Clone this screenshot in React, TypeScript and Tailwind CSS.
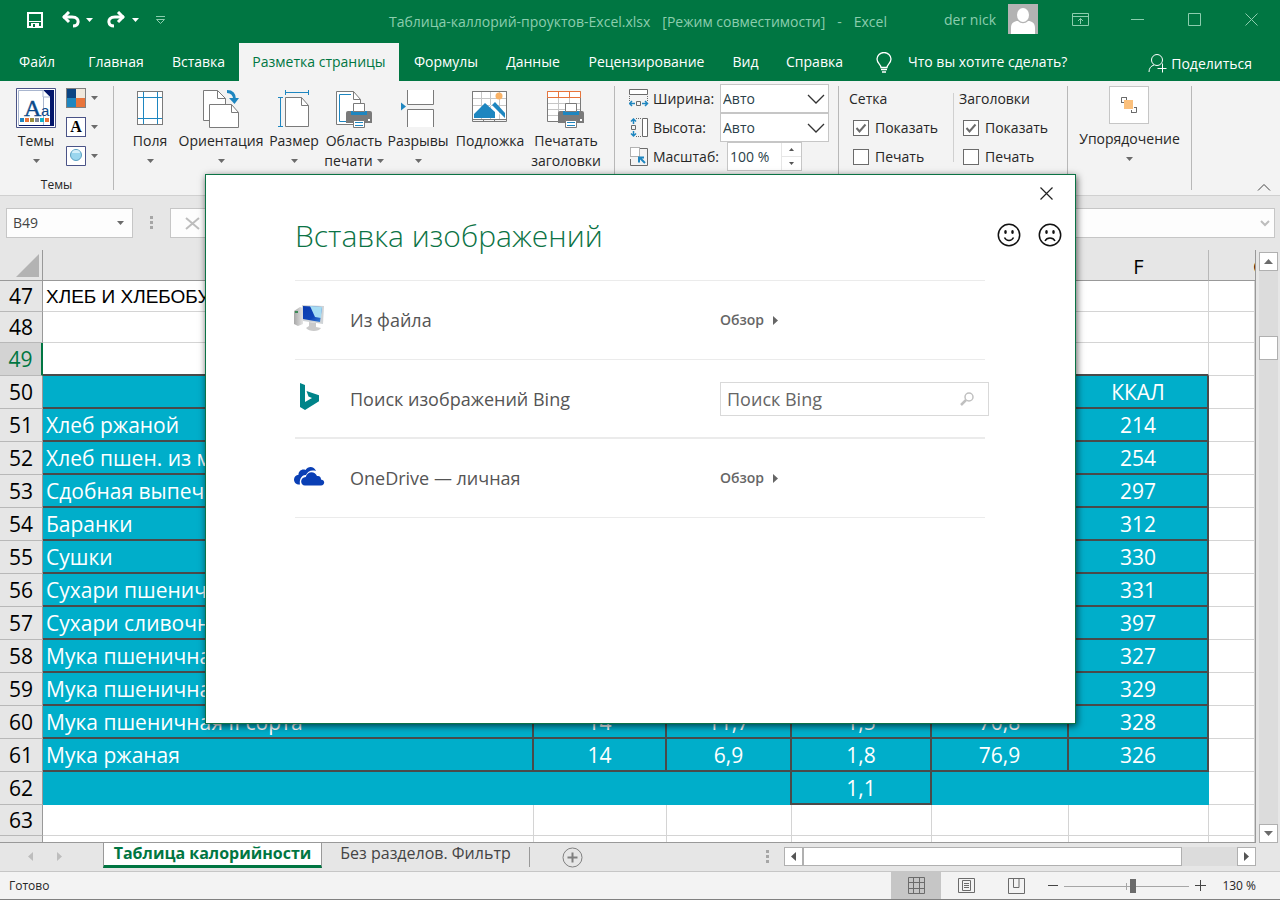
import { useState, type ReactNode } from 'react';

const tabsBefore = [
  { name: 'Файл', width: 'w-[74px]' },
  { name: 'Главная', width: 'w-[84px]' },
  { name: 'Вставка', width: 'w-[81px]' },
];

const tabsAfter = [
  { name: 'Формулы', width: 'w-[94px]' },
  { name: 'Данные', width: 'w-[80px]' },
  { name: 'Рецензирование', width: 'w-[147px]' },
  { name: 'Вид', width: 'w-[51px]' },
  { name: 'Справка', width: 'w-[87px]' },
];

const products = [
  { row: 51, name: 'Хлеб ржаной', cells: ['42,4', '4,7', '0,7', '49,8', '214'] },
  { row: 52, name: 'Хлеб пшен. из муки I сорта', cells: ['34,3', '7,7', '2,4', '53,4', '254'] },
  { row: 53, name: 'Сдобная выпечка', cells: ['26,1', '7,6', '4,5', '60', '297'] },
  { row: 54, name: 'Баранки', cells: ['17', '10,4', '1,3', '68,7', '312'] },
  { row: 55, name: 'Сушки', cells: ['12', '11', '1,3', '73', '330'] },
  { row: 56, name: 'Сухари пшеничные', cells: ['12', '11,2', '1,4', '72,4', '331'] },
  { row: 57, name: 'Сухари сливочные', cells: ['8', '8,5', '10,6', '71,3', '397'] },
  { row: 58, name: 'Мука пшеничная в/сорта', cells: ['14', '10,3', '0,9', '74,2', '327'] },
  { row: 59, name: 'Мука пшеничная I сорта', cells: ['14', '10,6', '1,3', '73,2', '329'] },
  { row: 60, name: 'Мука пшеничная II сорта', cells: ['14', '11,7', '1,5', '70,8', '328'] },
  { row: 61, name: 'Мука ржаная', cells: ['14', '6,9', '1,8', '76,9', '326'] },
];

function Caret({ className = 'fill-[#6b6b6b]' }: { className?: string }) {
  return (
    <svg width="7" height="4" viewBox="0 0 7 4" className={`shrink-0 ${className}`}>
      <path d="M0 0h7L3.500 4z" />
    </svg>
  );
}

function Divider() {
  return <div className="my-[5px] w-px shrink-0 bg-[#b8b8b8]" />;
}

function Printer({ x, y }: { x: number; y: number }) {
  return (
    <g transform={`translate(${x} ${y})`}>
      <path d="M2 8h22a2 2 0 0 1 2 2v10H0V10a2 2 0 0 1 2-2z" fill="#7a7a7a" />
      <path d="M5 8h16v4H5z" fill="#1e86c0" />
      <path d="M7.500 8.500V.5h11v8z" fill="#fff" stroke="#7a7a7a" />
      <path d="M22 16h2v2h-2z" fill="#fff" />
      <path d="M7.500 17.500h11v7h-11z" fill="#fff" stroke="#7a7a7a" />
      <path d="M9 19.500h8M9 22.500h8" stroke="#1e86c0" />
    </g>
  );
}

const pageFill = { fill: '#fff', stroke: '#7a7a7a' };

const MarginsIcon = (
  <svg width="26" height="36" fill="none">
    <rect x=".5" y="1.500" width="25" height="33" {...pageFill} />
    <path d="M6.500 2v32M20.500 2v32M1 7.500h24M1 28.500h24" stroke="#1e86c0" />
  </svg>
);

const OrientationIcon = (
  <svg width="36" height="38" fill="none">
    <path d="M.5 30.500V.5h14l8 8v22z" {...pageFill} />
    <path d="M14.500.5v8h8" stroke="#7a7a7a" />
    <path d="M6.500 37.500v-23h22l7 8v15z" stroke="#7a7a7a" fill="#fff" />
    <path d="M28.500 14.500v8h7" stroke="#7a7a7a" />
    <path d="M24 1.500c5 0 7.500 2.500 7.500 8" stroke="#1e86c0" strokeWidth="3" />
    <path d="M26 8l5.500 6L36 8z" fill="#1e86c0" />
  </svg>
);

const SizeIcon = (
  <svg width="32" height="37" fill="none">
    <path d="M7.500 36.500v-29h16l7 8v21z" {...pageFill} />
    <path d="M23.500 7.500v8h7" stroke="#7a7a7a" />
    <path d="M7.500 0v5M30.500 0v5M8 2.500h22M0 7.500h5M0 36.500h5M2.500 8v28" stroke="#1e86c0" />
  </svg>
);

const PrintAreaIcon = (
  <svg width="36" height="38" fill="none">
    <path d="M.5 34.500V1.500h17l7 8v25z" {...pageFill} />
    <path d="M17.500 1.500v8h7" stroke="#7a7a7a" />
    <path d="M15 4.500H3.500v27H11" stroke="#1e86c0" />
    <Printer x={10} y={13} />
  </svg>
);

const BreaksIcon = (
  <svg width="34" height="37" fill="none">
    <path d="M6.500 0v14.500h26V0M6.500 37V19.500h26V37" {...pageFill} />
    <path d="M0 12.500v8l5-4z" fill="#1e86c0" />
  </svg>
);

const BackgroundIcon = (
  <svg width="36" height="34" fill="none">
    <path d="M.5 1.500h34v28H.5z" {...pageFill} />
    <path d="M1 8.500h33M1 15.500h33M9.500 2v27M18.500 2v27M27.500 2v27" stroke="#c6c6c6" />
    <path d="M.5 1.500h34v30H.5zM11.500 29v3M22.500 29v3" stroke="#7a7a7a" />
    <circle cx="27" cy="6" r="3.500" fill="#f9b266" />
    <path d="M2 28v-4l11-11 10 9 0 6zM20 15l3-3 10 11v5z" fill="#1e86c0" />
    <path d="M18 15l14 13" stroke="#fff" />
  </svg>
);

const PrintTitlesIcon = (
  <svg width="38" height="38" fill="none">
    <path d="M.5 1.500h33v30H.5z" {...pageFill} />
    <path d="M1 13.500h32M1 19.500h32M1 25.500h32M11.500 8v23M22.500 8v23" stroke="#c6c6c6" />
    <path d="M.5 1.500h33v6H.5zM11.500 2v5M22.500 2v5" stroke="#e8743b" fill="#fff" />
    <Printer x={11} y={13} />
  </svg>
);

const pageSetup = [
  { lines: ['Поля'], icon: MarginsIcon, width: 'w-14', caret: true },
  { lines: ['Ориентация'], icon: OrientationIcon, width: 'w-[86px]', caret: true },
  { lines: ['Размер'], icon: SizeIcon, width: 'w-[60px]', caret: true },
  { lines: ['Область', 'печати'], icon: PrintAreaIcon, width: 'w-[60px]', caret: true },
  { lines: ['Разрывы'], icon: BreaksIcon, width: 'w-[68px]', caret: true },
  { lines: ['Подложка'], icon: BackgroundIcon, width: 'w-[76px]', caret: false },
  { lines: ['Печатать', 'заголовки'], icon: PrintTitlesIcon, width: 'w-[76px]', caret: false },
];

function TitleBar() {
  return (
    <div className="flex h-[43px] items-center text-[#8ccdae]">
      <div className="flex w-[389px] shrink-0 items-center pb-1 pl-[27px] text-white">
        <button aria-label="Сохранить">
          <svg width="16" height="16" fill="none" stroke="#fff" strokeWidth="2">
            <path d="M1 1h14v14H1z" />
            <path d="M2 9.500h12" strokeWidth="1" />
            <path d="M4 11h8v4H4z" fill="#fff" stroke="none" />
            <path d="M6 12h2v3H6z" fill="#007642" stroke="none" />
          </svg>
        </button>
        <button aria-label="Отменить" className="ml-[19px] flex items-center gap-[6px]">
          <svg width="18" height="17" fill="none" stroke="#fff" strokeWidth="3">
            <path d="M1 6h9c5 0 6.500 3 6 5.500-.3 2-2 3.500-5 3.500" />
            <path d="M7 1L2 6l5 5" />
          </svg>
          <Caret className="fill-white" />
        </button>
        <button aria-label="Вернуть" className="ml-[14px] flex items-center gap-[7px]">
          <svg width="18" height="17" fill="none" stroke="#fff" strokeWidth="3">
            <path d="M17 6H8C3 6 1.500 9 2 11.500c.3 2 2 3.500 5 3.500" />
            <path d="M11 1l5 5-5 5" />
          </svg>
          <Caret className="fill-white" />
        </button>
        <button aria-label="Настройка панели" className="ml-4">
          <svg width="11" height="8" fill="none" stroke="#8ccdae">
            <path d="M1 .5h9M1.500 3.500h8l-4 4z" />
          </svg>
        </button>
      </div>
      <div className="flex grow gap-3 whitespace-nowrap text-sm">
        <span>Таблица-каллорий-проуктов-Excel.xlsx</span>
        <span>[Режим совместимости]</span>
        <span>-</span>
        <span>Excel</span>
      </div>
      <span className="mr-3 pb-1 text-sm">der nick</span>
      <svg width="30" height="30" className="mb-[5px] mr-[34px]">
        <path d="M0 0h30v30H0z" fill="#b3b3b3" />
        <ellipse cx="15" cy="11" rx="6" ry="7" fill="#fff" />
        <path d="M3 30v-6c0-5 3-7 7-7 3 3 7 3 10 0 4 0 7 2 7 7v6z" fill="#fff" />
      </svg>
      <div className="mb-1 flex items-center pr-[22px]">
        <button aria-label="Параметры ленты" className="mr-[42px]">
          <svg width="17" height="13" fill="none" stroke="#8ccdae">
            <path d="M.5.5h16v12H.5zM1 3.500h15M8.500 11V5.500M6 8l2.500-2.500L11 8" />
          </svg>
        </button>
        <button aria-label="Свернуть" className="mr-11">
          <svg width="13" height="13" stroke="#8ccdae"><path d="M0 6.500h13" /></svg>
        </button>
        <button aria-label="Развернуть" className="mr-11">
          <svg width="13" height="13" fill="none" stroke="#8ccdae"><path d="M.5.5h12v12H.5z" /></svg>
        </button>
        <button aria-label="Закрыть">
          <svg width="13" height="13" stroke="#8ccdae"><path d="M.5.5l12 12M12.500.5l-12 12" /></svg>
        </button>
      </div>
    </div>
  );
}

function RibbonTabs() {
  return (
    <div className="flex h-[38px] items-center text-sm text-white">
      {tabsBefore.map((tab) => (
        <button key={tab.name} className={`shrink-0 text-center ${tab.width}`}>{tab.name}</button>
      ))}
      <button className="h-full w-40 shrink-0 bg-[#f3f3f3] text-center text-[#007642]">Разметка страницы</button>
      {tabsAfter.map((tab) => (
        <button key={tab.name} className={`shrink-0 text-center ${tab.width}`}>{tab.name}</button>
      ))}
      <button className="ml-[18px] flex items-center gap-4 whitespace-nowrap">
        <svg width="16" height="21" fill="none" stroke="#fff">
          <path d="M5 15.500c0-3-4-4-4-8.500a7 6.500 0 0 1 14 0c0 4.500-4 5.500-4 8.500z" strokeWidth="1.300" />
          <path d="M5 17.500h6M6 20h4" strokeWidth="1.500" />
        </svg>
        Что вы хотите сделать?
      </button>
      <button className="ml-auto mr-7 flex items-center gap-1 pt-[3px]">
        <svg width="19" height="19" fill="none" stroke="#fff">
          <circle cx="9" cy="6" r="5.500" />
          <path d="M1 18c0-4 2-6 5-7M9.500 14.500h9M14.500 9.500v9" />
        </svg>
        Поделиться
      </button>
    </div>
  );
}

function CheckRow({ id, label, checked }: { id: string; label: string; checked: boolean }) {
  const [on, setOn] = useState(checked);
  return (
    <label htmlFor={id} className="flex h-[29px] items-center gap-[6px] pl-1">
      <span className="relative flex">
        <input
          id={id}
          type="checkbox"
          checked={on}
          onChange={() => setOn(!on)}
          className="size-4 appearance-none border border-[#6b6b6b] bg-white"
        />
        {on && (
          <svg width="16" height="16" fill="none" stroke="#6b6b6b" strokeWidth="2" className="pointer-events-none absolute inset-0">
            <path d="M3.500 8l3 3.500 6-7" />
          </svg>
        )}
      </span>
      {label}
    </label>
  );
}

function ScaleRow({ id, label, icon }: { id: string; label: string; icon: ReactNode }) {
  return (
    <div className="flex h-[29px] items-center">
      <span className="w-6 shrink-0">{icon}</span>
      <label htmlFor={id} className="w-[67px] shrink-0">{label}</label>
      <span className="relative flex h-[29px] w-[109px]">
        <select id={id} className="w-full appearance-none border border-[#c6c6c6] bg-white pl-[2px] text-[#2a3f4a]">
          <option>Авто</option>
        </select>
        <svg width="18" height="10" fill="none" stroke="#333" strokeWidth="1.300" className="pointer-events-none absolute right-1 top-[10px]">
          <path d="M1 1l8 8 8-8" />
        </svg>
      </span>
    </div>
  );
}

function Ribbon() {
  return (
    <div className="flex h-[115px] shrink-0 border-b border-[#d0d0d0] bg-[#f3f3f3] text-sm text-[#262626]">
      {/* Themes */}
      <div className="flex w-[113px] shrink-0 flex-col">
        <div className="flex h-[94px] gap-[10px] pl-4 pt-[7px]">
          <button className="flex w-10 flex-col items-center">
            <svg width="40" height="41" fill="none">
              <path d="M.5.5h39v39H.5z" stroke="#4a5387" fill="#fff" />
              <path d="M2.500 2.500h25v35h-25z" stroke="#a9b6cf" />
              <path d="M27 2h11v36H3v-1h31V9z" fill="#04176b" />
              <path d="M27 2v7h7z" fill="#fff" stroke="#a9b6cf" />
              <text x="8" y="28" fontFamily="Liberation Serif, serif" fontSize="24" fill="#0b4a8a" stroke="#0b4a8a" strokeWidth=".4">A</text>
              <text x="25" y="28" fontFamily="Liberation Sans, sans-serif" fontSize="15" fill="#0b4a8a">a</text>
              <path d="M4 30h4v4H4z" fill="#1e86c0" />
              <path d="M9 30h4v4H9z" fill="#e8743b" />
              <path d="M14 30h4v4h-4z" fill="#98903c" />
              <path d="M19 30h4v4h-4z" fill="#7f8797" />
              <path d="M24 30h4v4h-4z" fill="#12b2c8" />
              <path d="M29 30h4v4h-4z" fill="#e8743b" />
            </svg>
            <span className="mt-[2px] leading-5">Темы</span>
            <span className="mt-2"><Caret /></span>
          </button>
          <div className="flex flex-col gap-[9px]">
            <button aria-label="Цвета" className="flex items-center gap-[5px]">
              <svg width="20" height="20">
                <path d="M0 0h20v20H0z" fill="#808080" />
                <path d="M1 1h9v9H1z" fill="#0b4482" />
                <path d="M10 1h9v9h-9z" fill="#f0e8dc" />
                <path d="M1 10h9v9H1z" fill="#1e86c0" />
                <path d="M10 10h9v9h-9z" fill="#e8743b" />
              </svg>
              <Caret />
            </button>
            <button aria-label="Шрифты" className="flex items-center gap-[5px]">
              <span className="flex size-5 items-center justify-center border border-[#4a5387] bg-white font-['Liberation_Serif',serif] text-base font-bold leading-none text-black">A</span>
              <Caret />
            </button>
            <button aria-label="Эффекты" className="flex items-center gap-[5px]">
              <svg width="20" height="20">
                <path d="M.5.5h19v19H.5z" fill="#fff" stroke="#4a5387" />
                <circle cx="10" cy="9" r="5.500" fill="#9ad6ee" stroke="#5a9fc0" />
                <path d="M6 7a4 3 0 0 1 8 0z" fill="#d3effa" />
              </svg>
              <Caret />
            </button>
          </div>
        </div>
        <span className="text-center text-xs leading-5">Темы</span>
      </div>
      <Divider />

      {/* Page setup */}
      <div className="flex w-[500px] shrink-0 pl-2">
        {pageSetup.map(({ lines, icon, width, caret }) => (
          <button key={lines[0]} className={`flex shrink-0 flex-col items-center whitespace-nowrap leading-5 ${width}`}>
            <span className="flex h-12 items-start pt-[9px]">{icon}</span>
            <span className="mt-[2px]">{lines[0]}</span>
            <span className="flex h-5 items-center gap-1">
              {lines[1]}
              {caret && <Caret />}
            </span>
          </button>
        ))}
      </div>
      <Divider />

      {/* Scale to fit */}
      <div className="flex w-[223px] shrink-0 flex-col pl-[14px] pt-[3px]">
        <ScaleRow
          id="fit-width"
          label="Ширина:"
          icon={
            <svg width="20" height="19" fill="none">
              <path d="M.5.500h18v5H.5z" fill="#fff" stroke="#6b6b6b" />
              <path d="M.5 7v5M18.500 7v5" stroke="#6b6b6b" strokeDasharray="1 1" />
              <path d="M7.500 12.500h4v4h-4z" stroke="#6b6b6b" />
              <path d="M1 14.500h5M13 14.500h5M3 12l-2.500 2.500L3 17M16 12l2.500 2.500L16 17" stroke="#1e86c0" strokeWidth="1.500" />
            </svg>
          }
        />
        <ScaleRow
          id="fit-height"
          label="Высота:"
          icon={
            <svg width="20" height="20" fill="none">
              <path d="M13.500.5h5v18h-5z" fill="#fff" stroke="#6b6b6b" />
              <path d="M7 .5h6M7 18.500h6" stroke="#6b6b6b" strokeDasharray="1 1" />
              <path d="M2.500 7.500h4v4h-4z" stroke="#6b6b6b" />
              <path d="M4.500 1v5M4.500 13v5M2 3.500L4.500 1 7 3.500M2 15.500L4.500 18 7 15.500" stroke="#1e86c0" strokeWidth="1.500" />
            </svg>
          }
        />
        <div className="flex h-[29px] items-center">
          <svg width="20" height="19" fill="none" className="mr-1">
            <path d="M11 1.500h7.500v17H1.500V12" stroke="#6b6b6b" />
            <path d="M1.500.5h9v9h-9z" fill="#fff" stroke="#6b6b6b" strokeDasharray="1 1" />
            <path d="M11 11l5 5M10 15.500v-5h5" stroke="#1e86c0" strokeWidth="2" />
          </svg>
          <label htmlFor="scale" className="w-[74px] shrink-0">Масштаб:</label>
          <span className="flex h-[29px] w-[75px] border border-[#c6c6c6] bg-white">
            <input id="scale" defaultValue="100 %" className="w-[53px] pl-[2px] text-[#2a3f4a]" />
            <span className="flex grow flex-col border-l border-[#e6e6e6]">
              <button aria-label="Больше" className="flex grow items-center justify-center border-b border-[#e6e6e6]">
                <svg width="5" height="3"><path d="M0 3h5L2.500 0z" fill="#555" /></svg>
              </button>
              <button aria-label="Меньше" className="flex grow items-center justify-center">
                <svg width="5" height="3"><path d="M0 0h5L2.500 3z" fill="#555" /></svg>
              </button>
            </span>
          </span>
        </div>
      </div>
      <Divider />

      {/* Sheet options */}
      <div className="flex w-[228px] shrink-0 pl-[10px] pt-[3px]">
        <div className="w-[104px] shrink-0">
          <div className="flex h-[29px] items-center">Сетка</div>
          <CheckRow id="grid-show" label="Показать" checked />
          <CheckRow id="grid-print" label="Печать" checked={false} />
        </div>
        <div className="mt-[9px] h-[69px] w-px bg-[#d0d0d0]" />
        <div className="pl-[5px]">
          <div className="flex h-[29px] items-center">Заголовки</div>
          <CheckRow id="head-show" label="Показать" checked />
          <CheckRow id="head-print" label="Печать" checked={false} />
        </div>
      </div>
      <Divider />

      <div className="flex w-[123px] shrink-0 justify-center pt-[5px]">
        <button className="flex flex-col items-center">
          <span className="flex h-[38px] w-10 items-center justify-center border border-[#c6c6c6] bg-white">
            <svg width="16" height="16" fill="none">
              <path d="M6 .5H.5V6M1 5.500h2M5.500 1v2M15.500 10v5.500H10M10.500 13v2M13 10.500h2" stroke="#6b6b6b" />
              <path d="M3 3h9v9H3z" fill="#fbc07c" />
            </svg>
          </span>
          <span className="mt-[5px] leading-5">Упорядочение</span>
          <span className="mt-2"><Caret /></span>
        </button>
      </div>
      <Divider />
      <button aria-label="Свернуть ленту" className="mb-1 ml-auto mr-[9px] self-end">
        <svg width="14" height="8" fill="none" stroke="#444"><path d="M1 7.500l6-6 6 6" /></svg>
      </button>
    </div>
  );
}

function FormulaBar() {
  return (
    <div className="flex h-[54px] shrink-0 items-start pl-[6px] pr-[5px] pt-3 text-sm">
      <label className="flex h-[30px] w-[127px] shrink-0 items-center border border-[#c6c6c6] bg-[#fdfdfd] pr-2">
        <input aria-label="Имя ячейки" defaultValue="B49" className="min-w-0 grow pl-[6px] text-[#444]" />
        <Caret />
      </label>
      <svg width="3" height="14" className="mx-[17px] mt-2 fill-[#a6a6a6]">
        <path d="M0 0h3v3H0zM0 5h3v3H0zM0 10h3v3H0z" />
      </svg>
      <div className="flex h-[30px] grow items-center justify-between border border-[#c6c6c6] bg-[#fdfdfd] pl-[9px] pr-1">
        <svg width="15" height="13" fill="none" stroke="#bdbdbd" strokeWidth="2" className="ml-[5px]">
          <path d="M1 1l13 11M14 1L1 12" />
        </svg>
        <input aria-label="Строка формул" className="min-w-0 grow" />
        <svg width="10" height="7" fill="none" stroke="#bdbdbd" strokeWidth="2"><path d="M1 1l4 4 4-4" /></svg>
      </div>
    </div>
  );
}

function RowHead({ n, active }: { n?: number; active?: boolean }) {
  return (
    <th
      className={
        active
          ? 'border-b border-r-2 border-b-[#b8b8b8] border-r-[#007642] bg-[#d3d3d3] p-0 font-normal text-[#007642]'
          : 'border-b border-r border-b-[#b8b8b8] border-r-[#999] bg-[#e6e6e6] p-0 font-normal text-black'
      }
    >
      {n}
    </th>
  );
}

const light = 'border-b border-r border-[#d4d4d4] bg-white p-0';
const teal = 'border-b-2 border-r-2 border-[#4a4a4a] bg-[#00aeca] p-0 pt-[2px] text-center text-white';

function EmptyCells({ count }: { count: number }) {
  return Array.from({ length: count }, (_, i) => <td key={i} className={light} />);
}

function Sheet() {
  return (
    <div className="flex min-h-0 grow">
      <div className="min-w-0 grow overflow-hidden border-b border-r border-[#999]">
        <table className="w-full table-fixed border-separate border-spacing-0 text-[21px] leading-none">
          <colgroup>
            <col className="w-[43px]" />
            <col />
            <col className="w-[133px]" />
            <col className="w-[125px]" />
            <col className="w-[140px]" />
            <col className="w-[137px]" />
            <col className="w-[140px]" />
            <col className="w-[46px]" />
          </colgroup>
          <thead>
            <tr className="h-[31px]">
              <th className="border-b border-r border-[#999] p-0">
                <svg width="23" height="23" className="ml-4 fill-[#b3b3b3]"><path d="M23 0v23H0z" /></svg>
              </th>
              {['A', 'B', 'C', 'D', 'E', 'F'].map((c) => (
                <th key={c} className="border-b border-r border-b-[#999] border-r-[#b8b8b8] p-0 pt-1 text-xl font-normal leading-none">{c}</th>
              ))}
              <th className="overflow-hidden border-b border-[#999] p-0 pl-[44px] pt-1 text-left text-xl font-normal leading-none">G</th>
            </tr>
          </thead>
          <tbody>
            <tr className="h-[31px]">
              <RowHead n={47} />
              <td className={`${light} whitespace-nowrap font-['Liberation_Sans',sans-serif] text-[19px]`}>
                <div className="pl-[3px]">ХЛЕБ И ХЛЕБОБУЛОЧНЫЕ ИЗДЕЛИЯ</div>
              </td>
              <EmptyCells count={6} />
            </tr>
            <tr className="h-[31px]">
              <RowHead n={48} />
              <EmptyCells count={7} />
            </tr>
            <tr className="h-[33px]">
              <RowHead n={49} active />
              {[0, 1, 2, 3, 4, 5].map((i) => (
                <td key={i} className="border-b-2 border-r border-b-[#4a4a4a] border-r-[#d4d4d4] bg-white p-0" />
              ))}
              <EmptyCells count={1} />
            </tr>
            <tr className="h-[33px]">
              <RowHead n={50} />
              {['ПРОДУКТ', 'ВОДА', 'БЕЛКИ', 'ЖИРЫ', 'УГЛЕВОДЫ', 'ККАЛ'].map((h) => (
                <td key={h} className={teal}>{h}</td>
              ))}
              <EmptyCells count={1} />
            </tr>
            {products.map(({ row, name, cells }) => (
              <tr key={row} className="h-[33px]">
                <RowHead n={row} />
                <td className={teal}>
                  <div className="pl-[3px] text-left">{name}</div>
                </td>
                {cells.map((value, i) => (
                  <td key={i} className={teal}>{value}</td>
                ))}
                <EmptyCells count={1} />
              </tr>
            ))}
            <tr className="h-[33px]">
              <RowHead n={62} />
              <td colSpan={2} className="bg-[#00aeca] p-0" />
              <td className="border-r-2 border-[#4a4a4a] bg-[#00aeca] p-0" />
              <td className={teal}>1,1</td>
              <td colSpan={2} className="bg-[#00aeca] p-0" />
              <EmptyCells count={1} />
            </tr>
            <tr className="h-[31px]">
              <RowHead n={63} />
              <EmptyCells count={7} />
            </tr>
            <tr className="h-[31px]">
              <RowHead />
              <EmptyCells count={7} />
            </tr>
          </tbody>
        </table>
      </div>

      {/* Vertical scroll bar */}
      <div className="flex w-6 shrink-0 flex-col pl-[3px] pr-[2px] pt-[2px]">
        <button aria-label="Вверх" className="flex h-[19px] shrink-0 items-center justify-center border border-[#b0b0b0] bg-white">
          <svg width="9" height="5"><path d="M0 5h9L4.500 0z" fill="#6b6b6b" /></svg>
        </button>
        <div className="grow bg-[#dcdcdc] pt-[65px]">
          <div className="h-6 border border-[#b0b0b0] bg-white" />
        </div>
        <button aria-label="Вниз" className="flex h-[19px] shrink-0 items-center justify-center border border-[#b0b0b0] bg-white">
          <svg width="9" height="5"><path d="M0 0h9L4.500 5z" fill="#6b6b6b" /></svg>
        </button>
      </div>
    </div>
  );
}

function SheetTabs() {
  return (
    <div className="flex h-7 shrink-0 items-start text-base">
      <div className="flex w-[103px] shrink-0 items-center gap-6 pl-7 pt-[9px]">
        <svg width="5" height="9"><path d="M5 0v9L0 4.500z" fill="#bdbdbd" /></svg>
        <svg width="5" height="9"><path d="M0 0v9l5-4.500z" fill="#bdbdbd" /></svg>
      </div>
      <button className="h-[25px] w-[219px] shrink-0 whitespace-nowrap border-x border-b-[3px] border-x-[#999] border-b-[#007642] bg-white pb-[2px] font-bold leading-5 text-[#007642]">
        Таблица калорийности
      </button>
      <button className="w-[207px] shrink-0 whitespace-nowrap leading-5 text-[#444]">Без разделов. Фильтр</button>
      <div className="mt-1 h-5 w-px bg-[#999]" />
      <button aria-label="Новый лист" className="ml-8 mt-1">
        <svg width="21" height="21" fill="none" stroke="#808080">
          <circle cx="10.500" cy="10.500" r="9.500" />
          <path d="M5.500 10.500h10M10.500 5.500v10" strokeWidth="2" />
        </svg>
      </button>
      <svg width="3" height="14" className="ml-auto mr-[15px] mt-[7px] fill-[#a6a6a6]">
        <path d="M0 0h3v3H0zM0 5h3v3H0zM0 10h3v3H0z" />
      </svg>
      <div className="mr-6 mt-1 flex h-[19px] w-[472px] bg-[#dcdcdc]">
        <button aria-label="Влево" className="flex w-[19px] items-center justify-center border border-[#b0b0b0] bg-white">
          <svg width="5" height="9"><path d="M5 0v9L0 4.500z" fill="#555" /></svg>
        </button>
        <div className="w-[379px] border border-[#b0b0b0] bg-white" />
        <button aria-label="Вправо" className="ml-auto flex w-[19px] items-center justify-center border border-[#b0b0b0] bg-white">
          <svg width="5" height="9"><path d="M0 0v9l5-4.500z" fill="#555" /></svg>
        </button>
      </div>
    </div>
  );
}

function StatusBar() {
  return (
    <div className="flex h-[29px] shrink-0 items-center border-b border-t border-b-[#808080] border-t-[#c6c6c6] bg-[#f3f3f3] pl-[9px] pr-6 text-xs text-[#262626]">
      <span>Готово</span>
      <div className="ml-auto flex h-full items-center">
        <button aria-label="Обычный" className="flex h-full w-[50px] items-center justify-center bg-[#c6c6c6]">
          <svg width="17" height="17" fill="none" stroke="#6b6b6b">
            <path d="M.5.500h16v16H.5zM5.500 1v15M11.500 1v15M1 5.500h15M1 11.500h15" />
          </svg>
        </button>
        <button aria-label="Разметка" className="flex h-full w-[50px] items-center justify-center">
          <svg width="17" height="16" fill="none" stroke="#6b6b6b">
            <path d="M.5.5h16v14H.5zM4.500 2.500h8v10h-8zM6 5.500h5M6 7.500h5M6 9.500h5" />
          </svg>
        </button>
        <button aria-label="Страничный" className="flex h-full w-[50px] items-center justify-center">
          <svg width="17" height="16" fill="none" stroke="#6b6b6b">
            <path d="M.5.500h16v15H.5zM5.500 1v8.500H11V1" />
          </svg>
        </button>
      </div>
      <button aria-label="Уменьшить" className="ml-[7px]">
        <svg width="10" height="11" stroke="#444"><path d="M0 5.500h10" /></svg>
      </button>
      <svg width="125" height="16" className="mx-[6px]">
        <path d="M0 8.500h125M62.500 5v7" stroke="#a6a6a6" />
        <path d="M66 1h6v14h-6z" fill="#6b6b6b" />
      </svg>
      <button aria-label="Увеличить">
        <svg width="11" height="11" stroke="#444"><path d="M0 5.500h11M5.500 0v11" /></svg>
      </button>
      <span className="w-[50px] whitespace-nowrap text-right">130 %</span>
    </div>
  );
}

function Browse() {
  return (
    <a href="#browse" className="flex items-center gap-[9px] text-sm font-semibold text-[#666]">
      Обзор
      <svg width="5" height="9"><path d="M0 0v9l5-4.500z" fill="#666" /></svg>
    </a>
  );
}

function Face({ mouth }: { mouth: string }) {
  return (
    <svg width="24" height="24" fill="none" stroke="#111" strokeWidth="1.500">
      <circle cx="12" cy="12" r="10.700" />
      <path d={mouth} />
      <g fill="#111" stroke="none">
        <ellipse cx="8.500" cy="9" rx="1.300" ry="2" />
        <ellipse cx="15.500" cy="9" rx="1.300" ry="2" />
      </g>
    </svg>
  );
}

function InsertPictures() {
  const row = 'grid h-[79px] grid-cols-[55px_370px_269px] items-center border-b border-[#ebebeb]';
  return (
    <div className="absolute inset-0 flex items-center justify-center pb-0.5 pl-px">
      <div role="dialog" aria-labelledby="dialog-title" className="h-[550px] w-[871px] border border-[#0b7345] bg-white shadow-[1px_2px_7px_rgba(0,0,0,0.65)]">
        <div className="flex justify-end pr-[22px] pt-3">
          <button aria-label="Закрыть окно">
            <svg width="13" height="13" stroke="#222" strokeWidth="1.200"><path d="M.5.5l12 12M12.500.5l-12 12" /></svg>
          </button>
        </div>
        <div className="flex h-20 items-start justify-between pl-[89px] pr-[13px]">
          <h1 id="dialog-title" className="pt-4 text-[30px] font-light leading-10 text-[#0b7345]">Вставка изображений</h1>
          <div className="flex gap-[17px] pt-[23px]">
            <button aria-label="Нравится"><Face mouth="M7.500 14.500c2 4 7 4 9 0" /></button>
            <button aria-label="Не нравится"><Face mouth="M7 18c2-4 8-4 10 0" /></button>
          </div>
        </div>
        <div className="ml-[89px] mr-[90px] border-t border-[#ebebeb] text-lg text-[#555]">
          <div className={row}>
            <svg width="30" height="28" className="-ml-px mb-1">
              <defs>
                <linearGradient id="screen" x1="0" y1="0" x2="1" y2="1">
                  <stop offset="0" stopColor="#0a3bb0" />
                  <stop offset=".6" stopColor="#0f45b8" />
                  <stop offset="1" stopColor="#3f86d8" />
                </linearGradient>
                <linearGradient id="metal" x1="0" y1="0" x2="1" y2="0">
                  <stop offset="0" stopColor="#a8a8a8" />
                  <stop offset="1" stopColor="#e4e4e4" />
                </linearGradient>
              </defs>
              <path d="M0 7l6-4 3 1v16l-5 2-4-2z" fill="url(#metal)" />
              <path d="M1 7h3v2H1z" fill="#3d8b56" />
              <path d="M8 1l22 1-1 18-20-3z" fill="#cfd3d6" />
              <path d="M9 2l19 1-2 15-17-3z" fill="url(#screen)" />
              <path d="M16 2l12 1-1 11-6-1z" fill="#a6dcf3" />
              <path d="M15 18l7 1v4l5 1c-2 4-12 4-15 0l3-2z" fill="#cacaca" />
            </svg>
            <span>Из файла</span>
            <Browse />
          </div>
          <div className="grid h-[79px] grid-cols-[55px_370px_269px] items-center border-b-2 border-[#ebebeb]">
            <svg width="20" height="28" className="mb-1 ml-1">
              <path d="M1 0l5 2v17l7-4-3.500-1.600L7.500 8 20 12.300v6L6 27l-5-3z" fill="#008489" />
            </svg>
            <label htmlFor="bing">Поиск изображений Bing</label>
            <div className="flex h-[34px] items-center border border-[#d9d9d9] pr-[14px]">
              <input id="bing" placeholder="Поиск Bing" className="min-w-0 grow pl-[6px] placeholder:text-[#666]" />
              <svg width="14" height="14" fill="none" stroke="#c0c0c0">
                <circle cx="9" cy="5" r="4" strokeWidth="1.500" />
                <path d="M6 8l-5 5" strokeWidth="2.500" />
              </svg>
            </div>
          </div>
          <div className={row}>
            <svg width="31" height="19" className="-ml-px mb-1 fill-[#0a3fb5]">
              <path d="M6 17.500C3 18 0 16 0 12.500 0 10 2 8 4.500 7.700 4.500 4 8 1.500 11.500 3 14-1 20-1 22 4c-5-1.500-8.500.5-10 4-4-.5-7 4-6 9.500z" />
              <path d="M11 18.500c-5 0-5.500-8 .8-8.500C13 4 21 3.500 23 9c2.500-.5 4 1 4 3.500 4.500.5 4 6 0 6z" />
            </svg>
            <span>OneDrive — личная</span>
            <Browse />
          </div>
        </div>
      </div>
    </div>
  );
}

export default function App() {
  return (
    <div className="relative flex h-screen flex-col overflow-hidden bg-[#e6e6e6] font-['Open_Sans','Noto_Sans',sans-serif]">
      <header className="shrink-0 bg-[#007642]">
        <TitleBar />
        <RibbonTabs />
      </header>
      <Ribbon />
      <FormulaBar />
      <Sheet />
      <SheetTabs />
      <StatusBar />
      <InsertPictures />
    </div>
  );
}
